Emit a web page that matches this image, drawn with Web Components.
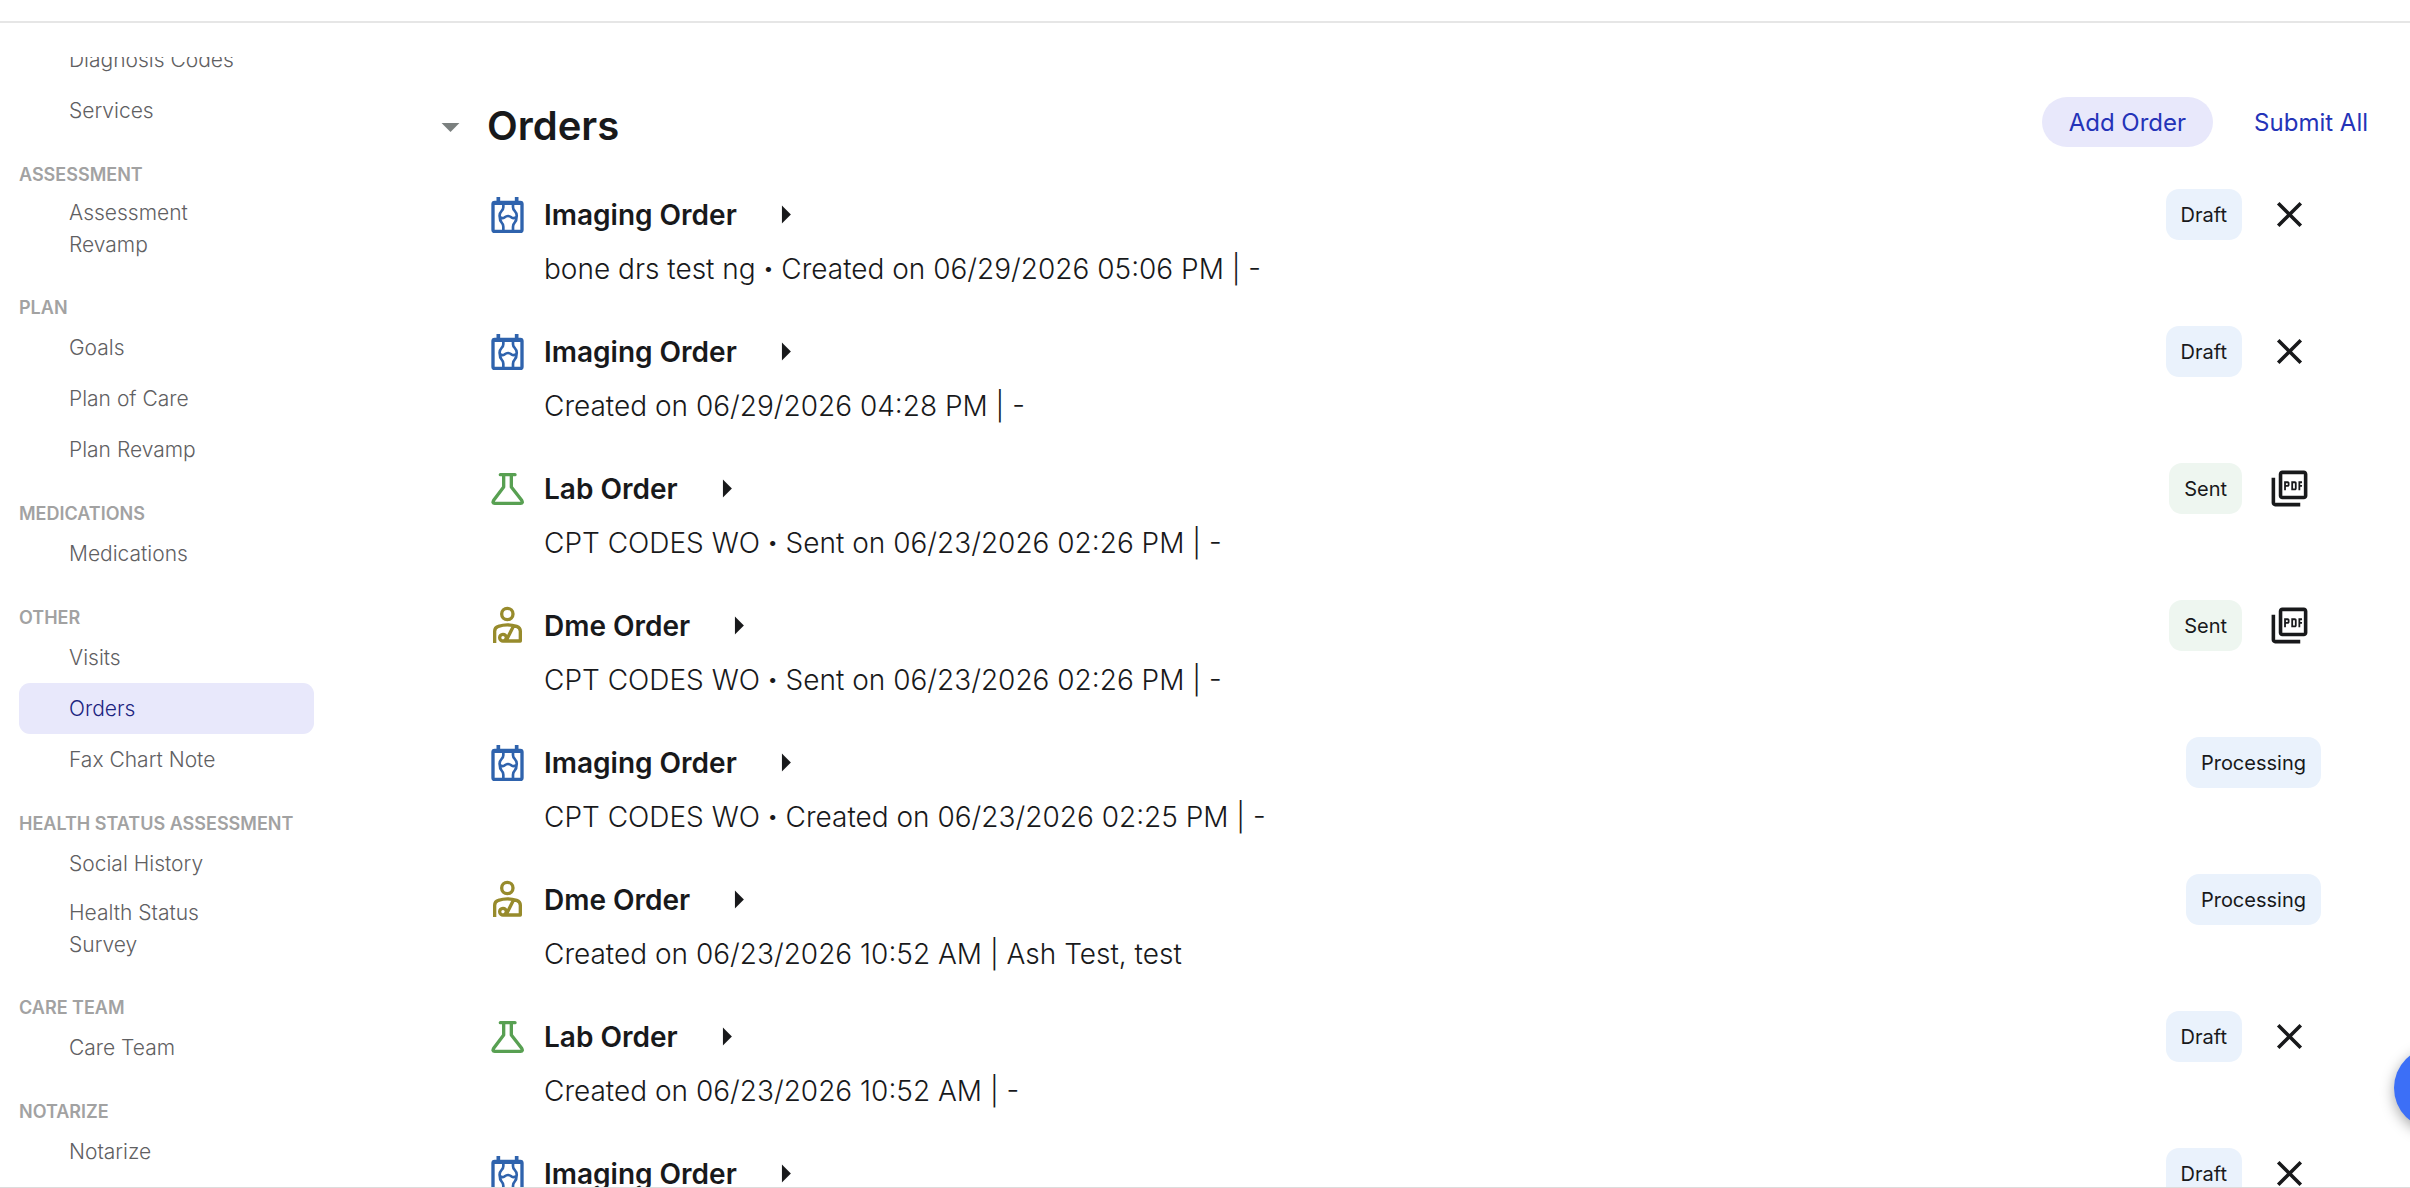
<!DOCTYPE html>
<html lang="en">
<head>
<meta charset="utf-8">
<title>Chart note – Orders</title>
<style>
html,body{margin:0;height:100%;overflow:hidden;background:#fff;font-family:Inter,"Liberation Sans",sans-serif;color:#18191b}
chart-app{height:100%}
</style>
</head>
<body>
<chart-app></chart-app>
<script>
const define=(name,css,html)=>customElements.define(name,class extends HTMLElement{
  connectedCallback(){
    if(this.shadowRoot)return;
    const root=this.attachShadow({mode:'open'});
    root.innerHTML='<style>*{box-sizing:border-box}'+css+'</style>'+(typeof html==='function'?html(this):html);
  }
});

const ICONS={
  imaging:`<svg viewBox="32 45 108 120" width="36" height="40" fill="none" stroke="#2f63ad" stroke-linejoin="round"><path d="M57 67V51M112 67V51" stroke-width="11"/><rect x="41" y="67" width="87" height="87" rx="5" stroke-width="10"/><path d="M41 69H128" stroke-width="12"/><path d="M72 69V82Q72 89 66 94Q60 100 61 109Q61 122 67 128Q72 133 72 140V153M101 69V82Q101 89 107 94Q113 100 112 109Q112 122 106 128Q101 133 101 140V153M62 111Q68 117 76 112Q86 104 96 112Q104 117 111 111" stroke-width="8"/></svg>`,
  lab:`<svg viewBox="32 28 108 120" width="36" height="40" fill="none" stroke="#58a052" stroke-width="10" stroke-linejoin="round" stroke-linecap="round"><path d="M63 45H107"/><path d="M73 46V82L43 122Q38 131 46 131H124Q132 131 127 122L96 82V46"/></svg>`,
  dme:`<svg viewBox="32 34 108 120" width="36" height="40" fill="none" stroke="#978b2c" stroke-width="10"><circle cx="84" cy="58" r="17"/><path d="M46 145V110Q46 98 57 95Q84 86 112 95Q123 99 123 110V139H72A10 10 0 1 1 81 129Q80 136 73 139M103 93L83 133" stroke-linejoin="round"/></svg>`,
  close:`<svg viewBox="0 0 24 24" width="43" height="43" fill="#18191b"><path d="M19 6.41 17.59 5 12 10.59 6.41 5 5 6.41 10.59 12 5 17.59 6.41 19 12 13.41 17.59 19 19 17.59 13.41 12z"/></svg>`,
  pdf:`<svg viewBox="0 0 24 24" width="43" height="43" fill="#18191b"><path d="M20 2H8c-1.1 0-2 .9-2 2v12c0 1.1.9 2 2 2h12c1.1 0 2-.9 2-2V4c0-1.100-.9-2-2-2zm0 14H8V4h12v12zM4 6H2v14c0 1.100.9 2 2 2h14v-2H4V6zm12 6V9c0-.55-.45-1-1-1h-2v5h2c.55 0 1-.45 1-1zm-2-3h1v3h-1V9zm4 2h1v-1h-1V9h1V8h-2v5h1zm-8 0h1c.55 0 1-.45 1-1V9c0-.55-.45-1-1-1H9v5h1v-2zm0-2h1v1h-1V9z"/></svg>`,
  right:`<svg viewBox="0 0 24 24" width="43" height="43" fill="#18191b"><path d="M10 17l5-5-5-5v10z"/></svg>`,
  down:`<svg viewBox="0 0 24 24" width="43" height="43" fill="#7b807f"><path d="M7 10l5 5 5-5H7z"/></svg>`
};

define('nav-item',`
:host{display:block}
a{display:flex;align-items:center;min-height:51px;padding:8px 64px 8px 50px;border-radius:11px;font-size:21px;line-height:32px;color:#5f6062;text-decoration:none;font-weight:300}
:host([active]) a{background:#e8e8fb;color:#1c2480}`,
'<a href="#"><slot></slot></a>');

define('nav-section',`
:host{display:block}
h2{margin:27px 0 2px;font-size:18px;line-height:24px;font-weight:600;color:#a2a2a2;text-transform:uppercase;white-space:nowrap}`,
el=>(el.getAttribute('label')?`<h2>${el.getAttribute('label')}</h2>`:'')+'<slot></slot>');

define('status-chip',`
:host{display:flex;align-items:center;height:51px;padding:0 15px;border-radius:13px;background:#eaf2fc;font-size:20px;font-weight:400}
:host([tone=sent]){background:#eef6f0}`,
'<slot></slot>');

define('order-row',`
:host{display:flex;align-items:flex-start;justify-content:space-between;height:137px}
.info{display:grid;grid-template-columns:54px auto;min-width:0}
.kind,.title,.side{display:flex;align-items:center;height:51px}
.title{gap:27px}
h3{margin:0;font-size:28px;line-height:40px;font-weight:600}
p{grid-column:2;margin:8px 0 0;font-size:28px;line-height:42px;font-weight:300}
button{display:flex;align-items:center;justify-content:center;border:0;padding:0;background:none;cursor:pointer}
.side{gap:15px}
.side button{width:64px;height:51px}
svg{display:block}`,
el=>{
  const kind=el.getAttribute('kind'),status=el.getAttribute('status');
  const action={Draft:['close','Delete order'],Sent:['pdf','Open PDF']}[status];
  const title={imaging:'Imaging Order',lab:'Lab Order',dme:'Dme Order'}[kind];
  return `<div class="info"><div class="kind">${ICONS[kind]}</div><div class="title"><h3>${title}</h3><button aria-label="Expand order">${ICONS.right}</button></div><p><slot></slot></p></div>
  <div class="side"><status-chip tone="${status.toLowerCase()}">${status}</status-chip>${action?`<button aria-label="${action[1]}">${ICONS[action[0]]}</button>`:''}</div>`;
});

define('orders-panel',`
:host{display:block}
header{display:flex;align-items:center;padding:0 15px 0 0;height:58px}
header button{border:0;background:none;padding:0;font:inherit;cursor:pointer}
h1{flex:1;margin:0 0 0 15px;font-size:40px;line-height:50px;font-weight:600}
svg{display:block}
.actions{display:flex;gap:14px;padding-bottom:8px}
.actions button{height:50px;padding:0 27px;border-radius:25px;font-size:24px;color:#2433b8}
.actions .add{background:#e8e8fb}
.rows{padding:34px 89px 0 61px}`,
`<header><button aria-label="Collapse orders">${ICONS.down}</button><h1>Orders</h1>
<div class="actions"><button class="add">Add Order</button><button>Submit All</button></div></header>
<div class="rows"><slot></slot></div>`);

define('chat-fab',`
:host{position:fixed;right:-66px;bottom:59px;display:block}
button{display:block;width:82px;height:82px;border:0;border-radius:50%;background:#3c6ff7;box-shadow:0 4px 14px rgba(0,0,0,.35)}`,
'<button aria-label="Help"></button>');

define('chart-app',`
:host{display:flex;flex-direction:column}
.top{flex:none;height:23px;border-bottom:2px solid #e6e6e6}
.body{flex:1;min-height:0;display:flex;border-bottom:1px solid #dcdcdc}
nav{flex:none;width:314px;margin-top:34px;padding-left:19px;overflow:hidden}
.list{margin-top:-23px}
main{flex:1;min-width:0;margin-left:115px;overflow:hidden;padding-top:74px}
b{font-weight:800}`,
`<div class="top"></div>
<div class="body">
<nav><div class="list">
<nav-section><nav-item>Diagnosis Codes</nav-item><nav-item>Services</nav-item></nav-section>
<nav-section label="Assessment"><nav-item>Assessment Revamp</nav-item></nav-section>
<nav-section label="Plan"><nav-item>Goals</nav-item><nav-item>Plan of Care</nav-item><nav-item>Plan Revamp</nav-item></nav-section>
<nav-section label="Medications"><nav-item>Medications</nav-item></nav-section>
<nav-section label="Other"><nav-item>Visits</nav-item><nav-item active>Orders</nav-item><nav-item>Fax Chart Note</nav-item></nav-section>
<nav-section label="Health Status Assessment"><nav-item>Social History</nav-item><nav-item>Health Status Survey</nav-item></nav-section>
<nav-section label="Care Team"><nav-item>Care Team</nav-item></nav-section>
<nav-section label="Notarize"><nav-item>Notarize</nav-item></nav-section>
</div></nav>
<main><orders-panel>
<order-row kind="imaging" status="Draft">bone drs test ng <b>·</b> Created on 06/29/2026 05:06 PM | -</order-row>
<order-row kind="imaging" status="Draft">Created on 06/29/2026 04:28 PM | -</order-row>
<order-row kind="lab" status="Sent">CPT CODES WO <b>·</b> Sent on 06/23/2026 02:26 PM | -</order-row>
<order-row kind="dme" status="Sent">CPT CODES WO <b>·</b> Sent on 06/23/2026 02:26 PM | -</order-row>
<order-row kind="imaging" status="Processing">CPT CODES WO <b>·</b> Created on 06/23/2026 02:25 PM | -</order-row>
<order-row kind="dme" status="Processing">Created on 06/23/2026 10:52 AM | Ash Test, test</order-row>
<order-row kind="lab" status="Draft">Created on 06/23/2026 10:52 AM | -</order-row>
<order-row kind="imaging" status="Draft"></order-row>
</orders-panel></main>
</div>
<chat-fab></chat-fab>`);
</script>
</body>
</html>
